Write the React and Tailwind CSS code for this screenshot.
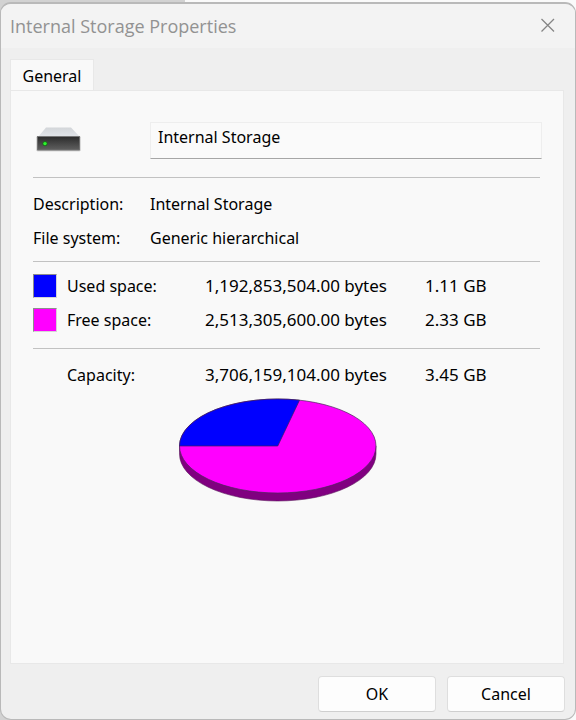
import React from "react";

function DriveIcon() {
  return (
    <svg width="46" height="26" viewBox="0 0 46 26" aria-hidden="true">
      <defs>
        <linearGradient id="driveTop" x1="0" y1="0" x2="0" y2="1">
          <stop offset="0" stopColor="#d3d6d9" />
          <stop offset="1" stopColor="#e2e5ea" />
        </linearGradient>
        <linearGradient id="driveFront" x1="0" y1="0" x2="0" y2="1">
          <stop offset="0" stopColor="#2b2b2b" />
          <stop offset="1" stopColor="#606060" />
        </linearGradient>
      </defs>
      <path d="M10 0.5H35L44 10H2Z" fill="url(#driveTop)" />
      <rect x="0.5" y="9.2" width="44" height="15" rx="1" fill="#b9b9b9" />
      <rect x="1" y="9.5" width="43" height="13.5" fill="url(#driveFront)" />
      <path d="M1.5 9.5V23H43.5V9.5" fill="none" stroke="#777" strokeWidth="0.8" />
      <circle cx="9" cy="16.6" r="2.6" fill="#1f6b1f" />
      <circle cx="9" cy="16.6" r="1.7" fill="#2cf52c" />
    </svg>
  );
}

function PieChart() {
  return (
    <svg width="200" height="105" viewBox="0 0 200 105" role="img" aria-label="Used and free space">
      <path d="M1.5 48V56A98.25 47 0 0 0 198 56V48Z" fill="#800080" stroke="#5c1a5c" strokeWidth="0.6" />
      <ellipse cx="99.75" cy="48" rx="98.25" ry="47" fill="#ff00ff" stroke="#4a2a5a" strokeWidth="0.7" />
      <path d="M99.75 48H1.5A98.25 47 0 0 1 121.5 2.2Z" fill="#0000ff" stroke="#3a205a" strokeWidth="0.7" />
    </svg>
  );
}

function Row({ label, bytes, size, swatch }) {
  return (
    <tr className="h-[34px]">
      <th scope="row" className="w-[172px] p-0 text-left font-normal">
        <span className="flex items-center gap-[10px]">
          <span className={`size-6 shrink-0 ${swatch}`} />
          {label}
        </span>
      </th>
      <td className="w-[220px] p-0 text-[17px]">{bytes}</td>
      <td className="p-0 text-[17px]">{size}</td>
    </tr>
  );
}

export default function App() {
  return (
    <div className="flex min-h-screen flex-col bg-[linear-gradient(to_right,#d2d2d2_185px,#fafafa_185px)] pt-[2px] font-['Noto_Sans',sans-serif] text-[16px] leading-6 text-black">
      <div className="flex flex-1 flex-col overflow-hidden rounded-[11px] border border-t-2 border-[#b9b9b9] bg-[#efefef]">
        <header className="flex h-11 items-center justify-between bg-[#f3f3f3] pr-[19px] pl-[9px]">
          <h1 className="font-['Open_Sans',sans-serif] text-[18px] text-[#929292]">Internal Storage Properties</h1>
          <button type="button" aria-label="Close" className="text-[#858585]">
            <svg width="16" height="16" viewBox="0 0 16 16" fill="none" stroke="currentColor" strokeWidth="1.3">
              <path d="M1.5 1L14 13.5M14 1L1.5 13.5" />
            </svg>
          </button>
        </header>

        <main className="flex flex-1 flex-col pt-[11px] pr-[11px] pl-[9px]">
          <div role="tablist" className="flex">
            <button type="button" role="tab" aria-selected="true" className="-mb-px h-8 w-[84px] border border-b-0 border-[#e8e8e8] bg-[#f9f9f9]">
              General
            </button>
          </div>
          <section role="tabpanel" className="flex-1 border border-[#e8e8e8] bg-[#f9f9f9] pt-[31px] pr-[21px] pl-[22px]">
            <div className="flex items-start">
              <div className="w-[117px] pt-[5px] pl-[3px]">
                <DriveIcon />
              </div>
              <input
                aria-label="Name"
                defaultValue="Internal Storage"
                className="h-[37px] min-w-0 flex-1 border border-[#eeeeee] border-b-[#a6a6a6] bg-[#fafafa] px-[7px] pb-2 outline-none"
              />
            </div>

            <div className="mt-[18px] mr-[2px] border-t border-[#c2c2c2]" />
            <dl className="grid grid-cols-[117px_1fr] gap-y-[10px] pt-[14px] pb-[11px]">
              <dt>Description:</dt>
              <dd>Internal Storage</dd>
              <dt>File system:</dt>
              <dd>Generic hierarchical</dd>
            </dl>

            <div className="mr-[2px] border-t border-[#c2c2c2] pt-[7px] pb-[11px]">
              <table className="w-full table-fixed border-collapse">
                <tbody>
                  <Row label="Used space:" bytes="1,192,853,504.00 bytes" size="1.11 GB" swatch="border border-[#8c8c8c] border-r-[#d5d5d5] border-b-[#d5d5d5] bg-[#0000ff]" />
                  <Row label="Free space:" bytes="2,513,305,600.00 bytes" size="2.33 GB" swatch="border border-[#8c8c8c] border-r-[#d5d5d5] border-b-[#d5d5d5] bg-[#ff00ff]" />
                </tbody>
              </table>
            </div>

            <div className="mr-[2px] border-t border-[#c2c2c2] pt-[9px]">
              <table className="w-full table-fixed border-collapse">
                <tbody>
                  <Row label="Capacity:" bytes="3,706,159,104.00 bytes" size="3.45 GB" swatch="" />
                </tbody>
              </table>
            </div>

            <div className="mt-[6px] mr-[19px] flex justify-center">
              <PieChart />
            </div>
          </section>
        </main>

        <footer className="flex justify-end gap-[11px] pt-3 pr-[10px] pb-[7px]">
          <button type="button" className="h-9 w-[118px] rounded-[4px] border border-[#dedede] border-b-[#cfcfcf] bg-[#fdfdfd]">
            OK
          </button>
          <button type="button" className="h-9 w-[118px] rounded-[4px] border border-[#dedede] border-b-[#cfcfcf] bg-[#fdfdfd]">
            Cancel
          </button>
        </footer>
      </div>
    </div>
  );
}
